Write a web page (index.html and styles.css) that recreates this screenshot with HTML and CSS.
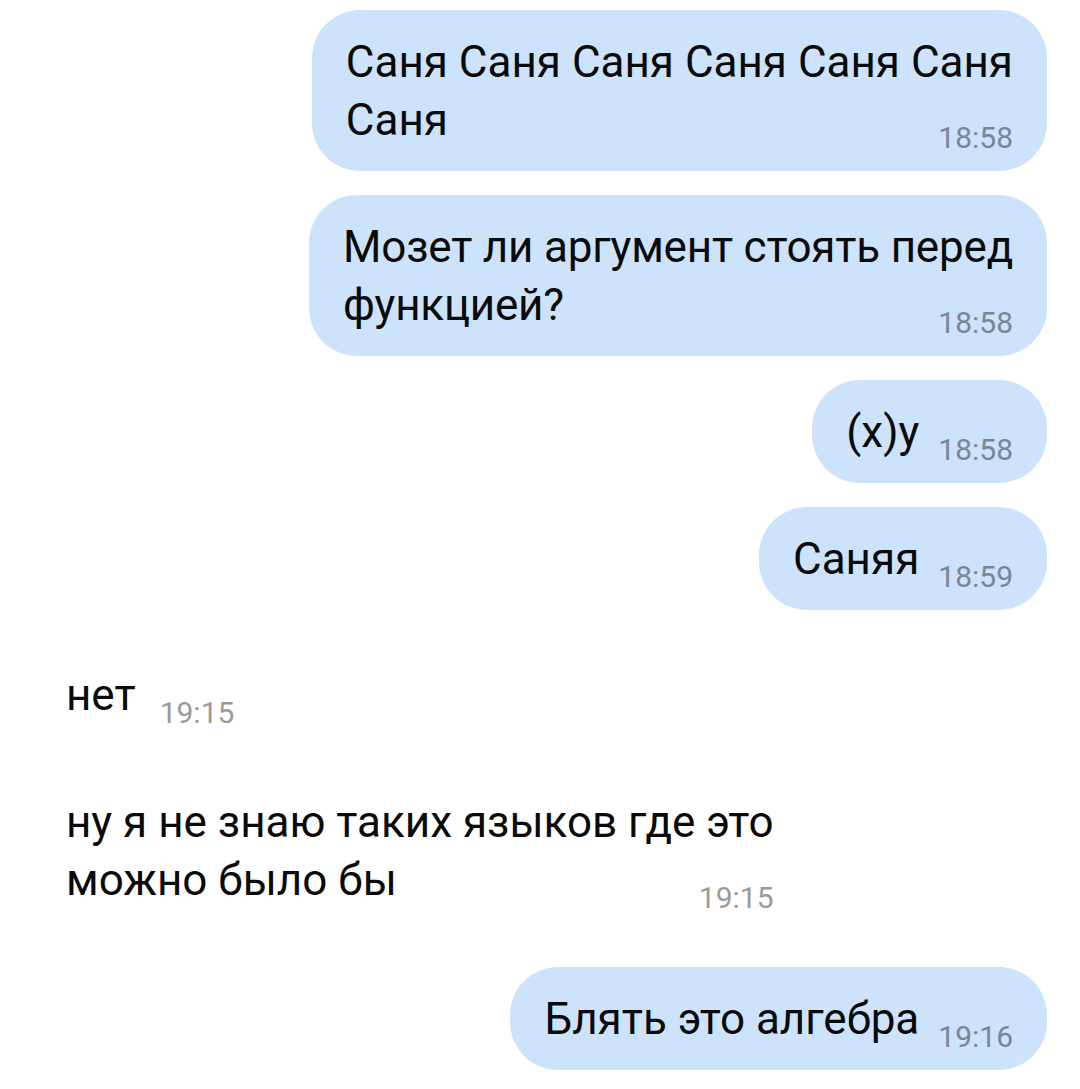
FILE: index.html
```html
<!DOCTYPE html>
<html lang="ru">
<head>
<meta charset="utf-8">
<title>Чат</title>
<link rel="stylesheet" href="styles.css">
</head>
<body>
<main class="chat">
  <div class="msg msg--out msg--multi">
    <div class="msg__text">Саня Саня Саня Саня Саня Саня<br>Саня</div>
    <span class="msg__time">18:58</span>
  </div>
  <div class="msg msg--out msg--multi">
    <div class="msg__text msg__text--tight">Мозет ли аргумент стоять перед<br>функцией?</div>
    <span class="msg__time">18:58</span>
  </div>
  <div class="msg msg--out">
    <div class="msg__text">(x)y</div>
    <span class="msg__time">18:58</span>
  </div>
  <div class="msg msg--out">
    <div class="msg__text">Саняя</div>
    <span class="msg__time">18:59</span>
  </div>
  <div class="msg msg--in msg--group">
    <div class="msg__text">нет</div>
    <span class="msg__time">19:15</span>
  </div>
  <div class="msg msg--in msg--multi">
    <div class="msg__text">ну я не знаю таких языков где это<br>можно было бы</div>
    <span class="msg__time">19:15</span>
  </div>
  <div class="msg msg--out msg--group-late">
    <div class="msg__text">Блять это алгебра</div>
    <span class="msg__time">19:16</span>
  </div>
</main>
</body>
</html>
```

FILE: styles.css
```css
html, body {
  margin: 0;
  padding: 0;
  background: #ffffff;
}

body {
  font-family: Roboto, "Noto Sans", "Liberation Sans", sans-serif;
  color: #0a0a0a;
  width: 1080px;
  height: 1089px;
  overflow: hidden;
}

.chat {
  display: flex;
  flex-direction: column;
  padding: 10px 33px 0 32px;
}

.msg {
  display: flex;
  align-items: flex-end;
  gap: 19px;
  padding: 23px 34px 16px 34px;
  border-radius: 48px;
  max-width: 760px;
}

.msg + .msg {
  margin-top: 24px;
}

.msg--out {
  align-self: flex-end;
  background: #cce3fb;
}

.msg--in {
  align-self: flex-start;
  background: transparent;
  gap: 24px;
}

.msg--group {
  margin-top: 33px !important;
}

.msg--group-late {
  margin-top: 36px !important;
}

.msg__text {
  font-size: 44px;
  line-height: 58px;
  margin-bottom: 6px;
  white-space: nowrap;
}

.msg__text--tight {
  letter-spacing: -0.2px;
}

.msg__time {
  font-size: 30px;
  line-height: 35px;
  color: #7a8696;
  white-space: nowrap;
}

.msg--in .msg__time {
  color: #9a9a9a;
}

.msg--multi {
  flex-direction: column;
  align-items: flex-end;
  gap: 0;
}

.msg--multi .msg__text {
  align-self: stretch;
  margin-bottom: 0;
}

.msg--multi .msg__time {
  margin-top: -29px;
}
```
